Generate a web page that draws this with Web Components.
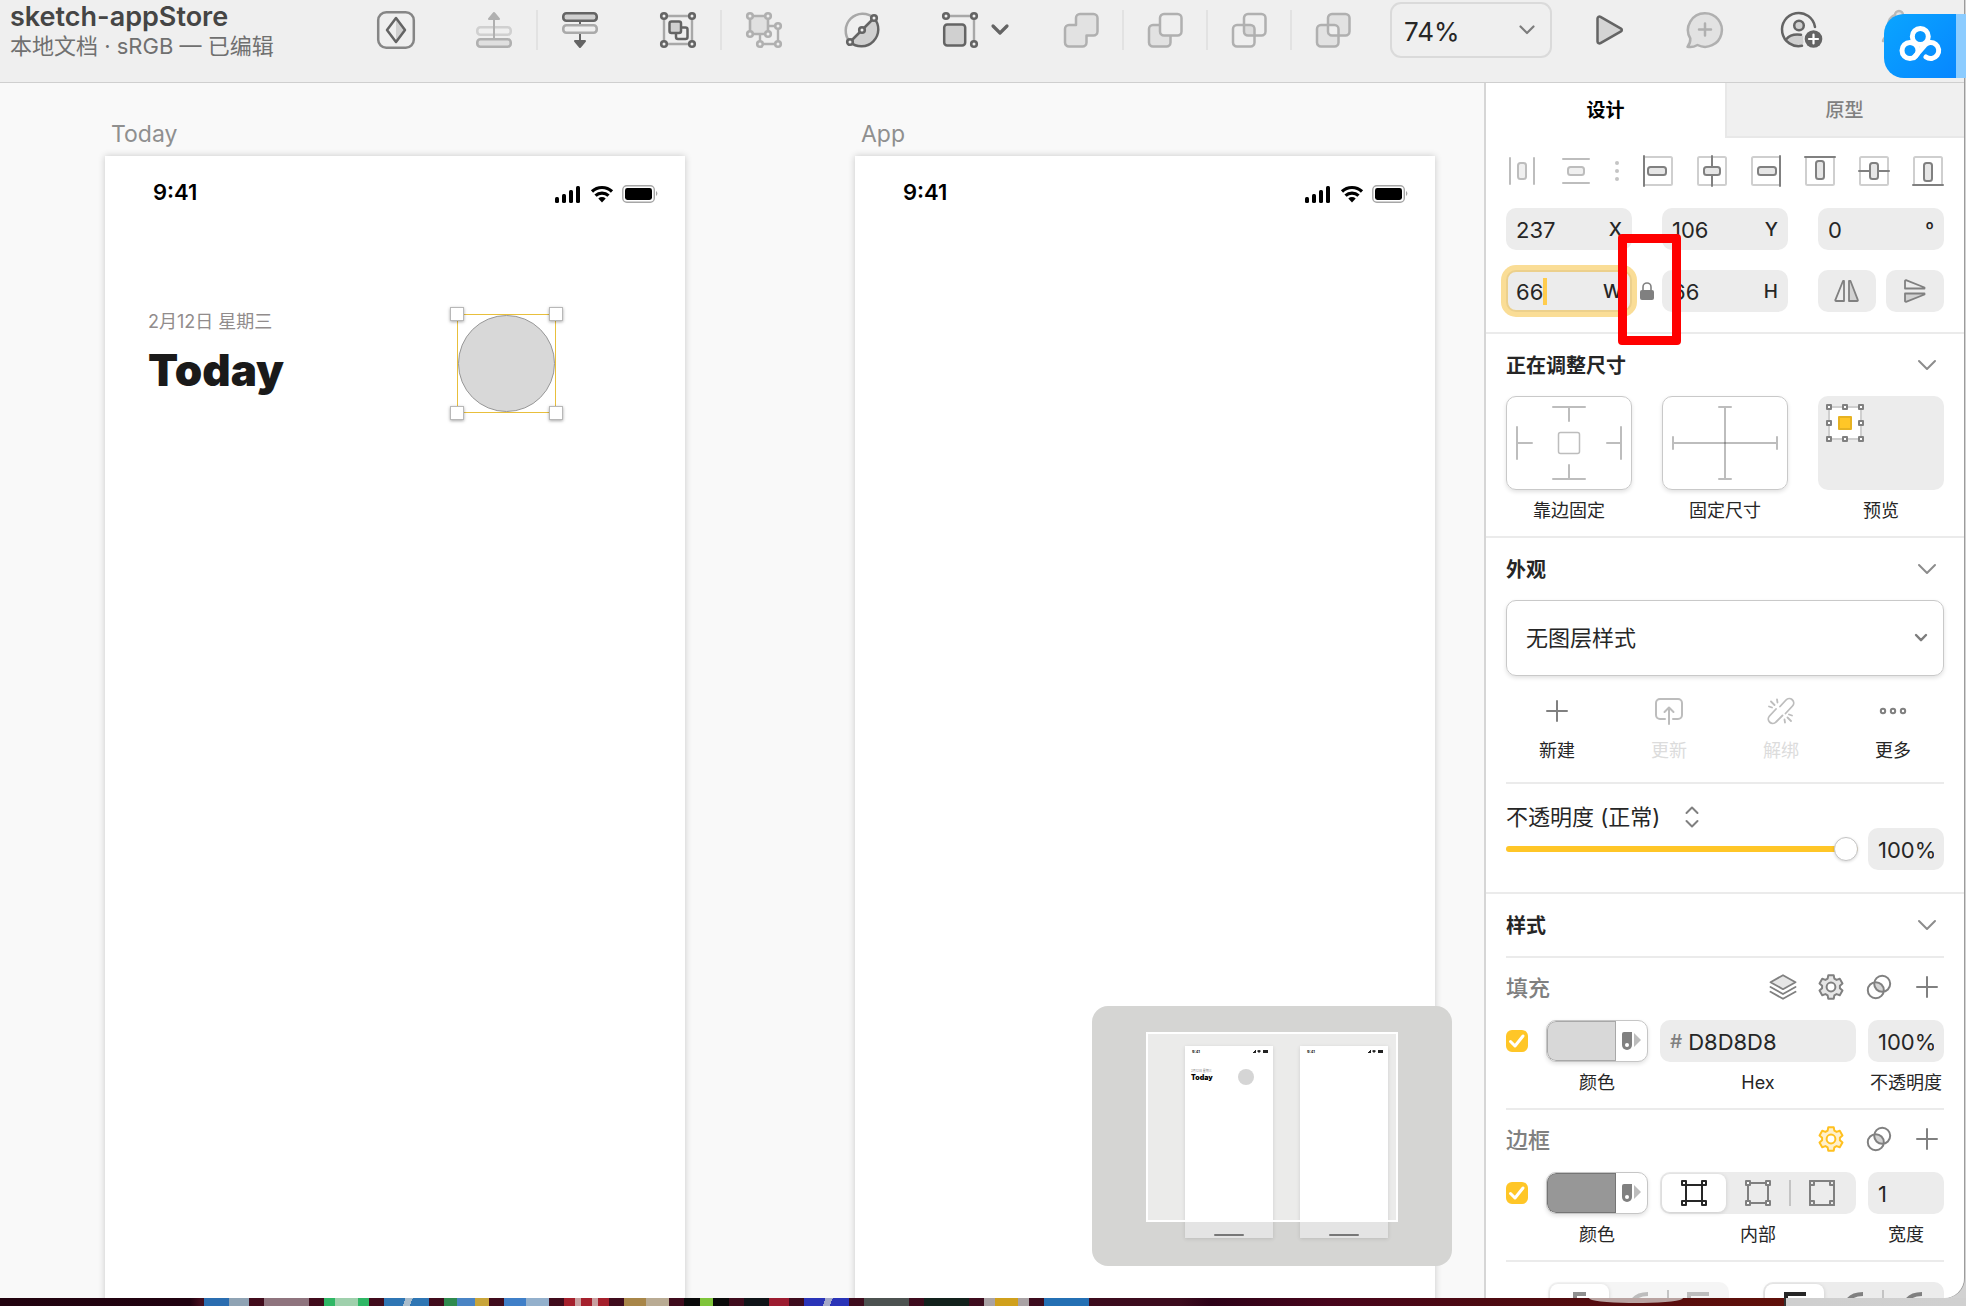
<!DOCTYPE html>
<html lang="zh-CN">
<head>
<meta charset="utf-8">
<title>sketch-appStore</title>
<style>
  html, body { margin: 0; height: 100%; }
  body { font-family: Inter, "Noto Sans CJK SC", sans-serif; color: #262626; overflow: hidden; }
</style>
</head>
<body>
<sk-desktop></sk-desktop>

<script>
/* ---------- icons ---------- */
const gear = (() => {
  const pts = [];
  for (let k = 0; k < 6; k++) {
    const a = -90 + 60 * k;
    for (const [d, r] of [[-22, 9], [-13, 12], [13, 12], [22, 9]]) {
      const t = (a + d) * Math.PI / 180;
      pts.push((13 + r * Math.cos(t)).toFixed(2) + ' ' + (13 + r * Math.sin(t)).toFixed(2));
    }
  }
  return `<path d="M${pts.join('L')}Z" fill="var(--gf,#e6e6e6)" stroke="var(--gs,#808080)" stroke-width="2"/><circle cx="13" cy="13" r="4.4" fill="#fff" stroke="var(--gs,#808080)" stroke-width="2"/>`;
})();
const knob = (x, y, c = '#646464', f = '#efefef') => `<circle cx="${x}" cy="${y}" r="2.8" fill="${f}" stroke="${c}" stroke-width="2.6"/>`;
const small = (x, y, c) => `<rect x="${x - 2}" y="${y - 2}" width="4" height="4" fill="#fff" stroke="${c}" stroke-width="2"/>`;
const frame = (c, o, i) => `<g stroke="${c}" stroke-width="2"><path d="M${i} 3V25M${28 - i} 3V25M3 ${i}H25M3 ${28 - i}H25"/>${[[o, o], [28 - o, o], [o, 28 - o], [28 - o, 28 - o]].map(p => small(p[0], p[1], c)).join('')}</g>`;
const BACK = 'x="15" y="4" width="21.5" height="21.5" rx="4"', FRONT = 'x="4" y="15" width="21.5" height="21.5" rx="4"';
const HIT = 'M15 19a4 4 0 0 1 4-4h6.5v6.5a4 4 0 0 1-4 4H15z';
const box = '<rect x="1" y="1" width="28" height="28" rx="1.5" stroke="#cfcfcf"/>';
const icons = {
  symbol: [40, 40, '<rect x="2.2" y="2.2" width="35.6" height="35.6" rx="8" stroke="#868686" stroke-width="2.5"/><path d="M20 8L29 20L20 32Z" fill="#d0d0d0"/><path d="M20 8L29 20L20 32L11 20Z" stroke="#646464" stroke-width="2.5"/>'],
  forward: [40, 40, '<rect x="3.3" y="17.3" width="33.4" height="7.4" rx="3" stroke="#d0d0d0" stroke-width="2.6"/><rect x="3.3" y="29.3" width="33.4" height="7.4" rx="3" stroke="#b0b0b0" fill="#e0e0e0" stroke-width="2.6"/><path d="M20 8V28" stroke="#b0b0b0"/><path d="M20 3L25 9H15Z" fill="#b0b0b0" stroke="#b0b0b0"/>'],
  backward: [40, 40, '<path d="M20 12V32" stroke="#646464"/><rect x="3.3" y="3.3" width="33.4" height="7.4" rx="3" stroke="#646464" fill="#d0d0d0" stroke-width="2.6"/><rect x="3.3" y="15.3" width="33.4" height="7.4" rx="3" stroke="#aaa" fill="#efefef" stroke-width="2.6"/><path d="M20 37L25 31H15Z" fill="#646464" stroke="#646464"/>'],
  group: [40, 40, `<path d="M6 6H34V34H6Z" stroke="#a8a8a8" stroke-width="2.4"/><rect x="18" y="17.5" width="11.5" height="11.5" rx="2" stroke="#646464" stroke-width="2.5"/><rect x="11.5" y="11.5" width="11.5" height="11.5" rx="2" fill="#d0d0d0" stroke="#646464" stroke-width="2.5"/>${knob(6, 6)}${knob(34, 6)}${knob(6, 34)}${knob(34, 34)}`],
  ungroup: [40, 40, `<path d="M16 24V34H34V16H24" stroke="#b0b0b0" stroke-width="2.4"/><path d="M6 6H24V24H6Z" fill="#e0e0e0" stroke="#b0b0b0" stroke-width="2.6"/>${[[6, 6], [24, 6], [6, 24], [24, 24], [34, 16], [16, 34], [34, 34]].map(p => knob(p[0], p[1], '#b0b0b0')).join('')}`],
  edit: [40, 40, `<path d="M8 32A17 17 0 0 1 32 8" stroke="#a8a8a8" stroke-width="2.5"/><path d="M32 8A17 17 0 0 1 8 32Z" fill="#d0d0d0" stroke="#646464" stroke-width="2.5"/>${knob(32, 8)}${knob(20, 20)}${knob(8, 32)}`],
  scale: [40, 40, `<path d="M6 6H34V34" stroke="#a8a8a8" stroke-width="2.4"/><rect x="4.2" y="14.5" width="21" height="21" rx="3" fill="#d0d0d0" stroke="#646464" stroke-width="2.5"/>${knob(6, 6)}${knob(34, 6)}${knob(34, 34)}`],
  union: [40, 40, '<path d="M19 4H32.5a4 4 0 0 1 4 4V21.5a4 4 0 0 1-4 4H25.5V32.5a4 4 0 0 1-4 4H8a4 4 0 0 1-4-4V19a4 4 0 0 1 4-4H15V8a4 4 0 0 1 4-4z" fill="#e2e2e2" stroke="#b0b0b0" stroke-width="2.5"/>'],
  subtract: [40, 40, `<g stroke="#b0b0b0" stroke-width="2.5"><rect ${FRONT} fill="#e2e2e2"/><rect ${BACK} fill="#efefef"/></g>`],
  intersect: [40, 40, `<path d="${HIT}" fill="#dcdcdc"/><g stroke="#b0b0b0" stroke-width="2.5"><rect ${FRONT}/><rect ${BACK}/></g>`],
  difference: [40, 40, `<g fill="#e2e2e2"><rect ${FRONT}/><rect ${BACK}/></g><path d="${HIT}" fill="#efefef"/><g stroke="#b0b0b0" stroke-width="2.5"><rect ${FRONT}/><rect ${BACK}/></g>`],
  play: [40, 40, '<path d="M8.5 8.5V31.5a2 2 0 0 0 3 1.7L32 21.4a1.6 1.6 0 0 0 0-2.8L11.5 6.8a2 2 0 0 0-3 1.7z" fill="#d4d4d4" stroke="#646464" stroke-width="2.5"/>'],
  comment: [40, 40, '<path d="M20 3.2A16.8 16.8 0 1 1 12.5 35C9 37 5.5 37.5 2.5 36.8C4.5 34.5 5.5 32 5.3 28.5A16.8 16.8 0 0 1 20 3.2Z" fill="#e2e2e2" stroke="#b0b0b0" stroke-width="2.5"/><path d="M20 13.5V25.5M14 19.5H26" stroke="#b0b0b0" stroke-width="2.5"/>'],
  person: [44, 40, '<path d="M6 30C9 25 14 24 19 24.5C23 25 25 27 25 30L22 35.5A16.5 16.5 0 0 1 6 30Z" fill="#d0d0d0"/><path d="M35 17A16.6 16.6 0 1 0 22 35.8M6.5 29C10 24.5 15 23.8 21 24.7" stroke="#646464" stroke-width="2.5"/><circle cx="19" cy="15.5" r="4.8" fill="#d0d0d0" stroke="#646464" stroke-width="2.5"/><circle cx="33.5" cy="29" r="10.5" fill="#efefef" stroke="none"/><circle cx="33.5" cy="29" r="8.8" fill="#646464" stroke="none"/><path d="M33.5 24.5V33.5M29 29H38" stroke="#fff" stroke-width="2.2"/>'],
  bell: [40, 40, '<path d="M16 5a4 4 0 0 1 8 0C31 8 31 14 31 20C31 26 36 28 36 31H4C4 28 9 26 9 20C9 14 9 8 16 5Z" fill="#e2e2e2" stroke="#b8b8b8" stroke-width="2.5"/>'],
  down: [18, 12, '<path d="M1 2L9 10L17 2" stroke="#8c8c8c"/>'],
  downS: [14, 10, '<path d="M2 2L7 7.2L12 2" stroke="#7d7d7d" stroke-width="2.4"/>'],
  downM: [16, 12, '<path d="M1.5 2.5L8 9L14.5 2.5" stroke="#7d7d7d" stroke-width="2.2"/>'],
  downB: [18, 14, '<path d="M2 3L9 10L16 3" stroke="#646464" stroke-width="3.2"/>'],
  updown: [14, 22, '<path d="M1.5 7L7 1.5L12.5 7M1.5 15L7 20.5L12.5 15" stroke="#808080"/>'],
  distH: [30, 30, '<path d="M3 2V28M27 2V28" stroke="#bdbdbd"/><rect x="11" y="7" width="8" height="16" rx="2.5" fill="#f0f0f0" stroke="#bdbdbd"/>'],
  distV: [30, 30, '<path d="M2 3H28M2 27H28" stroke="#bdbdbd"/><rect x="7" y="11" width="16" height="8" rx="2.5" fill="#f0f0f0" stroke="#bdbdbd"/>'],
  dots: [4, 22, '<g fill="#c4c4c4"><circle cx="2" cy="3" r="2"/><circle cx="2" cy="11" r="2"/><circle cx="2" cy="19" r="2"/></g>'],
  alL: [30, 30, box + '<path d="M1 0V30" stroke="#808080"/><rect x="5" y="11" width="18" height="8" rx="2.5" fill="#e6e6e6" stroke="#808080"/>'],
  alC: [30, 30, box + '<path d="M15 0V30" stroke="#808080"/><rect x="7" y="11" width="16" height="8" rx="2.5" fill="#e6e6e6" stroke="#808080"/>'],
  alR: [30, 30, box + '<path d="M29 0V30" stroke="#808080"/><rect x="7" y="11" width="18" height="8" rx="2.5" fill="#e6e6e6" stroke="#808080"/>'],
  alT: [30, 30, box + '<path d="M0 1H30" stroke="#808080"/><rect x="11" y="5" width="8" height="18" rx="2.5" fill="#e6e6e6" stroke="#808080"/>'],
  alM: [30, 30, box + '<path d="M0 15H30" stroke="#808080"/><rect x="11" y="7" width="8" height="16" rx="2.5" fill="#e6e6e6" stroke="#808080"/>'],
  alB: [30, 30, box + '<path d="M0 29H30" stroke="#808080"/><rect x="11" y="7" width="8" height="18" rx="2.5" fill="#e6e6e6" stroke="#808080"/>'],
  lock: [14, 18, '<path d="M3 8V5a4 4 0 0 1 8 0V8" stroke="#808080" stroke-width="1.6"/><rect x="0" y="8" width="14" height="10" rx="2" fill="#808080" stroke="none"/>'],
  flipH: [26, 24, '<path d="M10 2V22H2.2a.8.8 0 0 1-.8-1.2L9 2z" fill="#ededed" stroke="#808080" stroke-width="1.8"/><path d="M15 2V22H23a.8.8 0 0 0 .8-1.2L16.5 2z" fill="#d2d2d2" stroke="#808080" stroke-width="1.8"/>'],
  flipV: [24, 26, '<path d="M2 10.5H21.5V9.5L3 2.2a.8.8 0 0 0-1 .8z" fill="#ededed" stroke="#808080" stroke-width="1.8"/><path d="M2 15.5H21.5V16.5L3 23.8a.8.8 0 0 1-1-.8z" fill="#d2d2d2" stroke="#808080" stroke-width="1.8"/>'],
  pin: [124, 92, '<g stroke="#bdbdbd"><path d="M46 10H78M62 10V24M46 82H78M62 82V68M10 30V62M10 46H25M114 30V62M114 46H100"/><rect x="51.5" y="35.5" width="21" height="21" rx="2" stroke-width="1.5"/></g>'],
  fix: [124, 92, '<g stroke="#bdbdbd"><path d="M56 10H68M56 82H68M62 10V82M10 40V52M114 40V52M10 46H114"/></g><path d="M61 45h2v2h-2z" fill="#909090"/>'],
  preview: [38, 38, `<path d="M3 3H35V35H3Z" fill="#fff" stroke="#cfcfcf"/>${[[3, 3], [19, 3], [35, 3], [3, 19], [35, 19], [3, 35], [19, 35], [35, 35]].map(p => small(p[0], p[1], '#808080')).join('')}<rect x="13" y="13" width="12" height="12" fill="#ffc627" stroke="#e6b222"/>`],
  plus: [24, 24, '<path d="M12 2V22M2 12H22" stroke="#808080"/>'],
  update: [28, 28, '<path d="M10 22H5a4 4 0 0 1-4-4V6a4 4 0 0 1 4-4H23a4 4 0 0 1 4 4V18a4 4 0 0 1-4 4H18M14 27V11M9.5 15L14 10.5L18.5 15" stroke="#bdbdbd"/>'],
  unlink: [28, 28, '<path d="M13 9.5L19 3A4.4 4.4 0 0 1 25.5 9L18.5 16.5M9 12L2.5 19A4.4 4.4 0 0 0 9 25L15.5 18.5M2 9.5L5 10.5M4 4.5L7.5 8M10 2.5L10.5 5.5M17.5 22.5L18 25.5M20.5 20.5L24 24M22 17.5L25 18.5" stroke="#bdbdbd" stroke-width="1.8"/>'],
  more: [28, 12, '<g stroke="#808080"><circle cx="4" cy="6" r="2.2"/><circle cx="14" cy="6" r="2.2"/><circle cx="24" cy="6" r="2.2"/></g>'],
  layers: [28, 26, '<path d="M14 1.2L26.5 8.2L14 15.2L1.5 8.2Z" fill="#e6e6e6" stroke="#808080" stroke-width="1.8"/><path d="M1.5 13L14 20L26.5 13M1.5 17.8L14 24.8L26.5 17.8" stroke="#808080" stroke-width="1.8"/>'],
  gear: [26, 26, gear],
  blend: [26, 26, '<path d="M8.3 8.6A8 8 0 0 1 17.3 17.4A8 8 0 0 1 8.3 8.6Z" fill="#d4d4d4"/><circle cx="16.2" cy="9.8" r="8" stroke="#808080"/><circle cx="9.8" cy="16.2" r="8" stroke="#808080"/>'],
  check: [22, 22, '<path d="M4.5 11.5L9 16L17 6" stroke="#fff" stroke-width="3"/>'],
  picker: [22, 20, '<path d="M3 1H11V14a5 5 0 0 1-10 0V3a2 2 0 0 1 2-2z" fill="#808080"/><circle cx="6" cy="14" r="2" fill="#fff"/><path d="M13 2L20 9L13 16Z" fill="#bdbdbd"/>'],
  bIn: [28, 28, frame('#262626', 4, 6)],
  bMid: [28, 28, frame('#808080', 4, 4)],
  bOut: [28, 28, '<path d="M2 2H26V26H2Z" stroke="#808080"/>' + [[4, 4], [24, 4], [4, 24], [24, 24]].map(p => small(p[0], p[1], '#808080').replace('#fff', '#ececec')).join('')],
  capA: [22, 20, '<path d="M6 20V2H17" stroke="#909090" stroke-width="4" stroke-linecap="butt" stroke-linejoin="miter"/>'],
  capB: [22, 20, '<path d="M2 20C2 8 8 2 20 2" stroke="currentColor" stroke-width="4" stroke-linecap="butt"/>'],
  capC: [22, 20, '<path d="M2 20V2H22" stroke="currentColor" stroke-width="4" stroke-linecap="butt" stroke-linejoin="miter"/>'],
  signal: [28, 18, '<rect x="1" y="12" width="4" height="6" rx="1.5" fill="#000"/><rect x="8" y="9" width="4" height="9" rx="1.5" fill="#000"/><rect x="15" y="5" width="4" height="13" rx="1.5" fill="#000"/><rect x="22" y="1" width="4" height="17" rx="1.5" fill="#000"/>'],
  wifi: [24, 18, '<path d="M2 6.5A14.5 14.5 0 0 1 22 6.5M5.5 10.7A9.5 9.5 0 0 1 18.5 10.7" stroke="#000" stroke-width="3.2" stroke-linecap="butt"/><path d="M8.3 13.5A5.5 5.5 0 0 1 15.7 13.5L12 17.5Z" fill="#000"/>'],
  battery: [36, 18, '<rect x=".8" y=".8" width="31.5" height="16.4" rx="4" stroke="#a6a6a6" stroke-width="1.4"/><rect x="3" y="3" width="27" height="12" rx="2.4" fill="#000"/><path d="M34 6a3 3 0 0 1 0 5z" fill="#a6a6a6"/>'],
  cloud: [82, 64, '<g stroke="#fff" stroke-width="5"><circle cx="36.3" cy="22.5" r="8"/><circle cx="26" cy="36.5" r="8"/><path d="M30 43.5L40.5 31.5A8 8 0 1 1 42 43"/></g>'],
};

/* ---------- base class ---------- */
const define = (name, css, html) => customElements.define(name, class extends HTMLElement {
  constructor() { super(); this.attachShadow({ mode: 'open' }); }
  connectedCallback() {
    const t = document.createElement('template');
    t.innerHTML = `<style>*{box-sizing:border-box}button,input,select{font:inherit;color:inherit;margin:0;padding:0;border:0;background:none;outline:0;appearance:none;min-width:0}:host{display:block}${css}</style>` + (typeof html === 'function' ? html(this) : html);
    this.shadowRoot.replaceChildren(t.content.cloneNode(true));
  }
});

define('sk-icon', ':host{display:inline-flex;flex:none}svg{display:block;overflow:visible}', el => {
  const [w, h, body] = icons[el.getAttribute('name')];
  return `<svg width="${w}" height="${h}" viewBox="0 0 ${w} ${h}" fill="none" stroke-width="2" stroke-linecap="round" stroke-linejoin="round" aria-hidden="true">${body}</svg>`;
});

/* ---------- toolbar ---------- */
define('sk-tool', ':host{flex:none}button{display:flex;align-items:center;justify-content:center;width:40px;height:40px}:host([narrow]) button{width:20px}',
  el => `<button type="button" aria-label="${el.getAttribute('icon')}"><sk-icon name="${el.getAttribute('icon')}"></sk-icon></button>`);

define('sk-toolbar', `
  :host{height:83px;flex:none;background:#efefef;border-bottom:1px solid #cfcfcf}
  .bar{display:flex;justify-content:space-between;padding:0 45px 0 10px}
  .left,.right,.end,.bool,.pair,.tight{display:flex;align-items:center}
  .left{height:60px;gap:58px}
  .right{height:60px;gap:37px}.end{gap:57px;margin-left:19px}.bool{gap:21px}.pair{gap:22px}.tight{gap:10px}
  .title{width:308px;flex:none;align-self:flex-start;white-space:nowrap}
  h1{margin:2px 0 0;font-size:27px;line-height:30px;font-weight:600;color:#454545}
  p{margin:0;font-size:22px;line-height:28px;color:#707070}
  i{width:2px;height:40px;background:#e2e2e2;flex:none}
  .zoom{display:grid;align-items:center;width:162px;height:56px;border:2px solid #dadada;border-radius:11px}
  .zoom>*{grid-area:1/1}.zoom select{width:100%;height:100%;padding:2px 0 0 12px;font-size:26px}
  .zoom sk-icon{justify-self:end;margin-right:15px;pointer-events:none}
`, `<div class="bar">
  <div class="left">
    <div class="title"><h1>sketch-appStore</h1><p>本地文档 · sRGB — 已编辑</p></div>
    <sk-tool icon="symbol"></sk-tool>
    <div class="pair"><sk-tool icon="forward"></sk-tool><i></i><sk-tool icon="backward"></sk-tool></div>
    <div class="pair"><sk-tool icon="group"></sk-tool><i></i><sk-tool icon="ungroup"></sk-tool></div>
    <sk-tool icon="edit"></sk-tool>
    <div class="tight"><sk-tool icon="scale"></sk-tool><sk-tool narrow icon="downB"></sk-tool></div>
  </div>
  <div class="right">
    <div class="bool"><sk-tool icon="union"></sk-tool><i></i><sk-tool icon="subtract"></sk-tool><i></i><sk-tool icon="intersect"></sk-tool><i></i><sk-tool icon="difference"></sk-tool></div>
    <div class="zoom"><select aria-label="zoom"><option>74%</option></select><sk-icon name="downM"></sk-icon></div>
    <sk-tool icon="play"></sk-tool>
    <div class="end"><sk-tool icon="comment"></sk-tool><sk-tool icon="person"></sk-tool><sk-tool icon="bell"></sk-tool></div>
  </div>
</div>`);

/* ---------- canvas ---------- */
define('sk-artboard', `
  :host{position:absolute;width:580px;top:37px;bottom:0}
  .name{font-size:23px;line-height:28px;height:36px;padding-left:6px;color:#8f8f8f}
  .page{position:relative;background:#fff;height:100%;box-shadow:0 0 7px rgba(0,0,0,.2)}
  .status{display:flex;justify-content:space-between;padding:22px 27px 0 48px;height:52px}
  .time{font-size:22px;line-height:28px;font-weight:600;color:#000}
  .sig{display:flex;gap:8px;padding-top:7px}
`, el => `<div class="name">${el.getAttribute('name')}</div>
<div class="page"><div class="status"><span class="time">9:41</span><span class="sig"><sk-icon name="signal"></sk-icon><sk-icon name="wifi"></sk-icon><sk-icon name="battery"></sk-icon></span></div><slot></slot></div>`);

define('sk-selection', `
  :host{position:absolute;width:99px;height:99px;box-sizing:border-box;border:1px solid #e8bf3c}
  .oval{width:100%;height:100%;border-radius:50%;background:#d8d8d8;border:1px solid #979797}
  b{position:absolute;width:14px;height:14px;background:#fff;border:1px solid #b8b8b8;box-shadow:0 1px 3px rgba(0,0,0,.35)}
  .n{top:-8px}.s{bottom:-8px}.w{left:-8px}.e{right:-8px}
`, '<div class="oval"></div><b class="n w"></b><b class="n e"></b><b class="s w"></b><b class="s e"></b>');

define('sk-minimap', `
  :host{position:absolute;right:32px;bottom:32px;width:360px;height:260px;border-radius:16px;background:#d5d5d3}
  .view{position:absolute;left:54px;top:26px;width:252px;height:190px;border:2px solid #fff;background:#ebebea}
  .line{position:absolute;left:54px;top:214px;width:252px;height:2px;background:#fff}
  .b{position:absolute;top:40px;width:88px;height:192px;background:linear-gradient(#fff 175px,#e4e4e4 175px);box-shadow:0 1px 4px rgba(0,0,0,.12);color:#000}
  .one{left:93px}.two{left:208px}
  .st{display:flex;justify-content:space-between;padding:3px 5px 0 7px;font-size:4px;line-height:5px;font-weight:600}
  .st svg{display:block}
  .d{padding:15px 0 0 6px;font-size:3px;line-height:4px;color:#888}
  .t{padding-left:6px;font-size:7px;line-height:9px;font-weight:900}
  .o{position:absolute;left:53px;top:23px;width:16px;height:16px;border-radius:50%;background:#d5d5d5}
  .h{position:absolute;left:29px;bottom:2px;width:30px;height:2px;background:#777;border-radius:1px}
`, () => {
  const st = '<div class="st"><span>9:41</span><svg width="16" height="5" viewBox="0 0 16 5"><path d="M0 4h1v-1h1v-1h1v-1h1v3zM5 2q2-2 4 0l-2 2zM11 1h5v3h-5z" fill="#222"/></svg></div>';
  return `<div class="view"></div><div class="b one">${st}<div class="d">2月12日 星期三</div><div class="t">Today</div><div class="o"></div><div class="h"></div></div><div class="b two">${st}<div class="h"></div></div><div class="line"></div>`;
});

define('sk-canvas', `
  :host{position:relative;flex:1;min-width:0;background:#f9f9f9;overflow:hidden}
  .date{position:absolute;left:43px;top:154px;font-size:18px;line-height:24px;color:#918c8c;white-space:nowrap}
  .big{position:absolute;left:43px;top:189px;font-size:44px;line-height:50px;font-weight:900;color:#1a1a1a}
  .today{left:105px}.app{left:855px}.pick{left:352px;top:158px}
`, `
  <sk-artboard name="Today" class="today"><div class="date">2月12日 星期三</div><div class="big">Today</div><sk-selection class="pick"></sk-selection></sk-artboard>
  <sk-artboard name="App" class="app"></sk-artboard>
  <sk-minimap></sk-minimap>`);

/* ---------- inspector controls ---------- */
define('sk-field', `
  .f{display:flex;align-items:center;height:42px;padding:0 10px;background:#ececec;border-radius:10px;font-size:22px;color:#262626}
  input{flex:1;width:0;height:100%;padding-top:1px}
  label{font-size:19px;font-weight:500;padding-top:1px}
  .pre{color:#808080;margin-right:6px}
  :host([focused]) .f{border:2px solid #ecd08c;padding:0 8px;box-shadow:0 0 0 5px #fadd96}
  :host([focused]) input{flex:none;width:auto;field-sizing:content}
  .caret{width:4px;height:27px;background:#ffcc4d;margin-right:auto}
`, el => {
  const g = n => el.getAttribute(n);
  return `<div class="f">${g('prefix') ? `<label class="pre" for="i">${g('prefix')}</label>` : ''}<input id="i" value="${g('value')}" aria-label="${g('label') || g('suffix') || 'Hex'}">${el.hasAttribute('focused') ? '<span class="caret"></span>' : ''}${g('suffix') ? `<label for="i">${g('suffix')}</label>` : ''}</div>`;
});

define('sk-heading', `
  :host{height:62px;display:flex;align-items:center;justify-content:space-between;padding-right:8px}
  h2{margin:0;padding-top:1px;font-size:20px;line-height:28px;font-weight:700}
`, '<h2><slot></slot></h2><sk-icon name="down"></sk-icon>');

define('sk-subhead', `
  :host{height:62px;box-sizing:border-box;display:flex;align-items:center;justify-content:space-between;padding:0 5px 4px 0}
  h3{margin:0;padding-top:2px;font-size:22px;line-height:28px;font-weight:500;color:#808080}
  div{display:flex;margin-right:-12px}
  button{width:48px;height:30px;display:flex;align-items:center;justify-content:center}
  :host([active]) .gear{--gs:#ffc01f;--gf:#fff0cc}
`, el => `<h3><slot></slot></h3><div>${el.hasAttribute('active') ? '' : '<button type="button" aria-label="layers"><sk-icon name="layers"></sk-icon></button>'}<button type="button" aria-label="settings" class="gear"><sk-icon name="gear"></sk-icon></button><button type="button" aria-label="blend"><sk-icon name="blend"></sk-icon></button><button type="button" aria-label="add"><sk-icon name="plus"></sk-icon></button></div>`);

define('sk-check', `
  :host{display:grid;width:22px;height:22px}
  input,sk-icon{grid-area:1/1}input{width:22px;height:22px;border-radius:6px;background:#ffc627}
  sk-icon{pointer-events:none}
`, el => `<input type="checkbox" checked aria-label="${el.getAttribute('label')}"><sk-icon name="check"></sk-icon>`);

define('sk-swatch', `
  .s{display:flex;height:42px;border-radius:10px;background:#fff;border:1px solid #c6c6c6;box-shadow:0 2px 4px rgba(0,0,0,.12);overflow:hidden}
  .c{flex:1;background:var(--swatch);box-shadow:inset 0 0 0 1px rgba(0,0,0,.22);border-radius:9px 0 0 9px}
  .p{width:31px;display:flex;align-items:center;justify-content:center}
`, '<div class="s"><button type="button" class="c" aria-label="颜色"></button><button type="button" class="p" aria-label="picker"><sk-icon name="picker"></sk-icon></button></div>');

define('sk-segment', `
  .g{display:flex;align-items:center;height:42px;padding:2px;border-radius:10px;background:#ececec}
  button{flex:1;height:38px;display:flex;align-items:center;justify-content:center;border-radius:8px}
  button[aria-pressed=true]{background:#fff;box-shadow:0 1px 4px rgba(0,0,0,.15)}
  i{width:2px;height:26px;background:#c4c4c4;margin:0 -1px}
  :host([cap]) button{align-items:flex-start;padding-top:8px;color:#808080}
  :host([cap]) button[aria-pressed=true]{color:#262626}
  :host([dim]) .g{background:#f5f5f5}
  :host([dim]) button{color:#bdbdbd}
`, el => {
  const n = el.getAttribute('icons').split(' ');
  const b = (k, on) => `<button type="button" aria-label="${k}" aria-pressed="${on}"><sk-icon name="${k}"></sk-icon></button>`;
  return `<div class="g">${b(n[0], true)}${b(n[1], false)}<i></i>${b(n[2], false)}</div>`;
});

define('sk-inspector', `
  :host{width:480px;box-sizing:border-box;flex:none;background:#fff;border-left:2px solid #d6d6d6;overflow:hidden;font-size:18px;line-height:24px}
  .tabs{display:grid;grid-template-columns:1fr 1fr;height:55px}
  .tabs button{font-size:19px}
  .tabs .on{font-weight:700;color:#000}
  .tabs .off{color:#808080;font-weight:500;background:#f0f0f0;box-shadow:inset 2px -2px #e8e8e8}
  section{padding:0 20px;border-bottom:2px solid #ebebeb}
  .align{display:flex;justify-content:center;align-items:center;gap:24px;padding:18px 0 22px}
  .align button{width:30px;height:30px}
  .three{display:grid;grid-template-columns:1fr 30px 1fr 30px 1fr;align-items:center;row-gap:20px}
  .geo{padding-bottom:20px}
  .lock{position:relative;display:flex;justify-content:center}
  .mark{position:absolute;left:-14px;top:-48px;width:63px;height:111px;border:9px solid #f00;border-radius:4px}
  .flip{display:flex;gap:10px}
  .flip button{flex:1;height:42px;border-radius:10px;background:#ececec;display:flex;align-items:center;justify-content:center}
  .cards{display:grid;grid-template-columns:1fr 1fr 1fr;column-gap:30px;padding-bottom:13px;text-align:center}
  .cards button{display:flex;width:100%;height:94px;border:1px solid #c9c9c9;border-radius:10px;box-shadow:0 2px 4px rgba(0,0,0,.12);margin-bottom:9px}
  .cards .pv{height:94px;border-radius:10px;background:#ececec;margin-bottom:9px;padding:8px;display:flex}
  .style{display:grid;align-items:center;height:76px;border:1px solid #c9c9c9;border-radius:10px;box-shadow:0 2px 4px rgba(0,0,0,.12)}
  .style>*{grid-area:1/1}.style select{width:100%;height:100%;padding-left:19px;font-size:22px}
  .style sk-icon{justify-self:end;margin-right:15px;pointer-events:none}
  .acts{display:grid;grid-template-columns:repeat(4,1fr);column-gap:10px;padding:20px 0 19px;border-bottom:2px solid #ebebeb}
  .acts button{display:flex;flex-direction:column;align-items:center;gap:13px}
  .acts span{height:30px;display:flex;align-items:center}
  .acts button:disabled{color:#dcdcdc}
  .opac{display:flex;gap:10px;padding:20px 0 22px;align-items:flex-end}
  .opac .l{flex:1;display:flex;flex-direction:column;gap:7px;height:66px}
  .mode{display:flex;align-items:center;gap:24px;height:26px;font-size:22px}
  .mode select{height:26px;line-height:26px}
  input[type=range]{width:100%;height:24px}
  input[type=range]::-webkit-slider-runnable-track{height:6px;border-radius:3px;background:#ffc627}
  input[type=range]::-webkit-slider-thumb{appearance:none;width:24px;height:24px;margin-top:-9px;border-radius:50%;background:#fff;border:1px solid #c4c4c4;box-shadow:0 1px 3px rgba(0,0,0,.15)}
  .opac sk-field{width:76px}
  .rule{border-bottom:2px solid #ebebeb}
  .row{display:grid;grid-template-columns:28px 102px 1fr 76px;column-gap:12px;row-gap:9px;align-items:center;text-align:center;white-space:nowrap;padding-bottom:13px;border-bottom:2px solid #ebebeb}
  .ends{display:grid;grid-template-columns:1fr 1fr;column-gap:34px;padding:20px 0 0 42px}
  .fill{--swatch:#d8d8d8}.line{--swatch:#979797}
`, `
  <div class="tabs" role="tablist"><button class="on" role="tab" type="button">设计</button><button class="off" role="tab" type="button">原型</button></div>
  <section class="geo">
    <div class="align">${['distH', 'distV'].map(n => `<button type="button" aria-label="${n}"><sk-icon name="${n}"></sk-icon></button>`).join('')}<sk-icon name="dots"></sk-icon>${['alL', 'alC', 'alR', 'alT', 'alM', 'alB'].map(n => `<button type="button" aria-label="${n}"><sk-icon name="${n}"></sk-icon></button>`).join('')}</div>
    <div class="three">
      <sk-field value="237" suffix="X"></sk-field><span></span><sk-field value="106" suffix="Y"></sk-field><span></span><sk-field value="0" suffix="º"></sk-field>
      <sk-field focused value="66" suffix="W"></sk-field><div class="lock"><sk-icon name="lock"></sk-icon><div class="mark"></div></div><sk-field value="66" suffix="H"></sk-field><span></span>
      <div class="flip"><button type="button" aria-label="flip horizontal"><sk-icon name="flipH"></sk-icon></button><button type="button" aria-label="flip vertical"><sk-icon name="flipV"></sk-icon></button></div>
    </div>
  </section>
  <section>
    <sk-heading>正在调整尺寸</sk-heading>
    <div class="cards">
      <div><button type="button" aria-label="靠边固定"><sk-icon name="pin"></sk-icon></button>靠边固定</div>
      <div><button type="button" aria-label="固定尺寸"><sk-icon name="fix"></sk-icon></button>固定尺寸</div>
      <div><div class="pv"><sk-icon name="preview"></sk-icon></div>预览</div>
    </div>
  </section>
  <section>
    <sk-heading>外观</sk-heading>
    <div class="style"><select aria-label="style"><option>无图层样式</option></select><sk-icon name="downS"></sk-icon></div>
    <div class="acts">
      <button type="button"><span><sk-icon name="plus"></sk-icon></span>新建</button>
      <button type="button" disabled><span><sk-icon name="update"></sk-icon></span>更新</button>
      <button type="button" disabled><span><sk-icon name="unlink"></sk-icon></span>解绑</button>
      <button type="button"><span><sk-icon name="more"></sk-icon></span>更多</button>
    </div>
    <div class="opac">
      <div class="l"><div class="mode"><select aria-label="blend mode"><option>不透明度 (正常)</option></select><sk-icon name="updown"></sk-icon></div><input type="range" value="100" aria-label="不透明度"></div>
      <sk-field value="100%" label="不透明度"></sk-field>
    </div>
  </section>
  <section>
    <sk-heading>样式</sk-heading>
    <div class="rule"></div>
    <sk-subhead>填充</sk-subhead>
    <div class="row">
      <sk-check label="填充"></sk-check><sk-swatch class="fill"></sk-swatch><sk-field prefix="#" value="D8D8D8"></sk-field><sk-field value="100%" label="不透明度"></sk-field>
      <span></span><span>颜色</span><span>Hex</span><span>不透明度</span>
    </div>
    <sk-subhead active>边框</sk-subhead>
    <div class="row">
      <sk-check label="边框"></sk-check><sk-swatch class="line"></sk-swatch><sk-segment icons="bIn bMid bOut"></sk-segment><sk-field value="1" label="宽度"></sk-field>
      <span></span><span>颜色</span><span>内部</span><span>宽度</span>
    </div>
    <div class="ends"><sk-segment cap dim icons="capA capB capC"></sk-segment><sk-segment cap icons="capC capB capB"></sk-segment></div>
  </section>`);

/* ---------- dock ---------- */
define('sk-dock', `
  :host{height:8px;flex:none;display:flex;background:linear-gradient(90deg,#c4c4c4,#d0d0d0)}
  .d{box-sizing:border-box;width:1786px;flex:none;display:flex;gap:15px;padding-left:204px;border-right:2px solid #333;background:linear-gradient(90deg,#22030f 0,#200210 190px,#420c1c 200px,#3c0c1e 1180px,#2d0218 1210px,#48051c 1330px,#4c0a12 1480px,#60100a 1784px)}
  span{width:45px;flex:none}
  .blob{width:94px;height:5px;margin-left:485px;background:#b9a3a1;border-radius:0 0 40px 40px/0 0 5px 5px}
`, `<div class="d">${['linear-gradient(90deg,#2a6db0 55%,#8fa3b4 55%)', '#8f747e', 'linear-gradient(90deg,#2fb765 25%,#9fd0ac 25% 75%,#2fb765 75%)', 'linear-gradient(110deg,#2f76b4 45%,#a9bccb 45% 60%,#2f76b4 60%)', 'linear-gradient(90deg,#2f8a4e 30%,#4a84c4 30% 70%,#c9a53a 70%)', 'linear-gradient(90deg,#3f7fc8 50%,#93b0cc 50%)', 'linear-gradient(90deg,#a5202c 25%,#c8a0a0 25% 38%,#a5202c 38% 62%,#c8a0a0 62% 75%,#a5202c 75%)', 'linear-gradient(90deg,#a88648 50%,#b9ab93 50%)', 'linear-gradient(90deg,#0a0a0a 35%,#7fc43a 35% 65%,#0a0a0a 65%)', 'linear-gradient(90deg,#101418 55%,#9c1c30 55%)', 'linear-gradient(110deg,#2a34b8 45%,#a4a8c8 45% 60%,#2a34b8 60%)', '#4c5250', '#12211c', 'linear-gradient(90deg,#a9a2a4 25%,#d0a01c 25% 75%,#a9a2a4 75%)', '#2470b4'].map(c => `<span style="background:${c}"></span>`).join('')}<div class="blob"></div></div>`);

/* ---------- desktop ---------- */
define('sk-desktop', `
  :host{position:relative;display:flex;flex-direction:column;height:100vh;background:#d2d2d2}
  .win{flex:1;min-height:0;display:flex;flex-direction:column;margin-right:2px;border-bottom-right-radius:20px;overflow:hidden;box-shadow:1px 0 0 #9c9c9c}
  .main{flex:1;min-height:0;display:flex}
  .disk{position:absolute;right:0;top:14px;width:82px;height:64px;border-radius:20px 0 0 20px;background:linear-gradient(90deg,transparent 72px,#8cccff 72px),linear-gradient(135deg,#0aa5ff,#0684ff);display:flex}
`, '<div class="win"><sk-toolbar></sk-toolbar><div class="main"><sk-canvas></sk-canvas><sk-inspector></sk-inspector></div></div><sk-dock></sk-dock><button type="button" class="disk" aria-label="netdisk"><sk-icon name="cloud"></sk-icon></button>');
</script>
</body>
</html>
